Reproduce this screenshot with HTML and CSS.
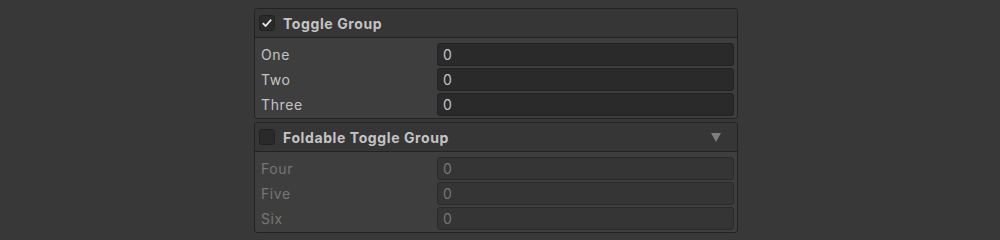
FILE: index.html
```html
<!DOCTYPE html>
<html lang="en">

<head>
    <meta charset="UTF-8">
    <title>Toggle Group</title>
    <link rel="stylesheet" href="styles.css">
</head>

<body>
    <div class="inspector">
        <!-- first group, on -->
        <div class="group">
            <div class="group-header">
                <span class="checkbox">
                    <svg width="12" height="12" viewBox="0 0 12 12"><path d="M1.8 6.2 L4.6 9 L10.2 2.6" fill="none" stroke="#e8e8e8" stroke-width="1.8"/></svg>
                </span>
                <span class="group-title">Toggle Group</span>
            </div>
            <div class="group-body">
                <div class="row"><span class="label">One</span><span class="field">0</span></div>
                <div class="row"><span class="label">Two</span><span class="field">0</span></div>
                <div class="row"><span class="label">Three</span><span class="field">0</span></div>
            </div>
        </div>

        <!-- second group, off -->
        <div class="group">
            <div class="group-header">
                <span class="checkbox"></span>
                <span class="group-title">Foldable Toggle Group</span>
                <span class="fold-arrow"></span>
            </div>
            <div class="group-body disabled">
                <div class="row"><span class="label">Four</span><span class="field">0</span></div>
                <div class="row"><span class="label">Five</span><span class="field">0</span></div>
                <div class="row"><span class="label">Six</span><span class="field">0</span></div>
            </div>
        </div>
    </div>
</body>

</html>
```

FILE: styles.css
```css
body {
    background-color: #383838;
    font-family: Inter, "Noto Sans", sans-serif;
    margin: 0;
    padding: 0;
    color: #c4c4c4;
}

.inspector {
    width: 484px;
    margin-left: 254px;
    padding-top: 8px;
    display: flex;
    flex-direction: column;
    gap: 3px;
}

.group {
    border: 1px solid #232323;
    border-radius: 3px;
    background-color: #3e3e3e;
}

.group-header {
    height: 28px;
    display: flex;
    align-items: center;
    padding-left: 4px;
    padding-right: 16px;
    background-color: #363636;
    border-bottom: 1px solid #232323;
    border-radius: 3px 3px 0 0;
}

.checkbox {
    width: 14px;
    height: 14px;
    border: 1px solid #212121;
    border-radius: 3px;
    background-color: #2a2a2a;
    display: flex;
    align-items: center;
    justify-content: center;
}

.group-title {
    margin-left: 8px;
    font-size: 14px;
    font-weight: bold;
    letter-spacing: 0.6px;
    color: #c4c4c4;
    flex: 1;
}

.fold-arrow {
    width: 0;
    height: 0;
    border-left: 5px solid transparent;
    border-right: 5px solid transparent;
    border-top: 9px solid #7f7f7f;
}

.group-body {
    padding: 5px 3px 2px 6px;
    display: flex;
    flex-direction: column;
    gap: 2px;
}

.row {
    display: flex;
    align-items: center;
    height: 23px;
}

.label {
    width: 176px;
    font-size: 14px;
    letter-spacing: 0.6px;
}

.field {
    flex: 1;
    height: 21px;
    line-height: 21px;
    border: 1px solid #212121;
    border-radius: 3px;
    background-color: #2a2a2a;
    padding-left: 5px;
    font-size: 14px;
}

.disabled .label,
.disabled .field {
    color: #767676;
}

.disabled .field {
    background-color: #353535;
    border-color: #2a2a2a;
}
```
